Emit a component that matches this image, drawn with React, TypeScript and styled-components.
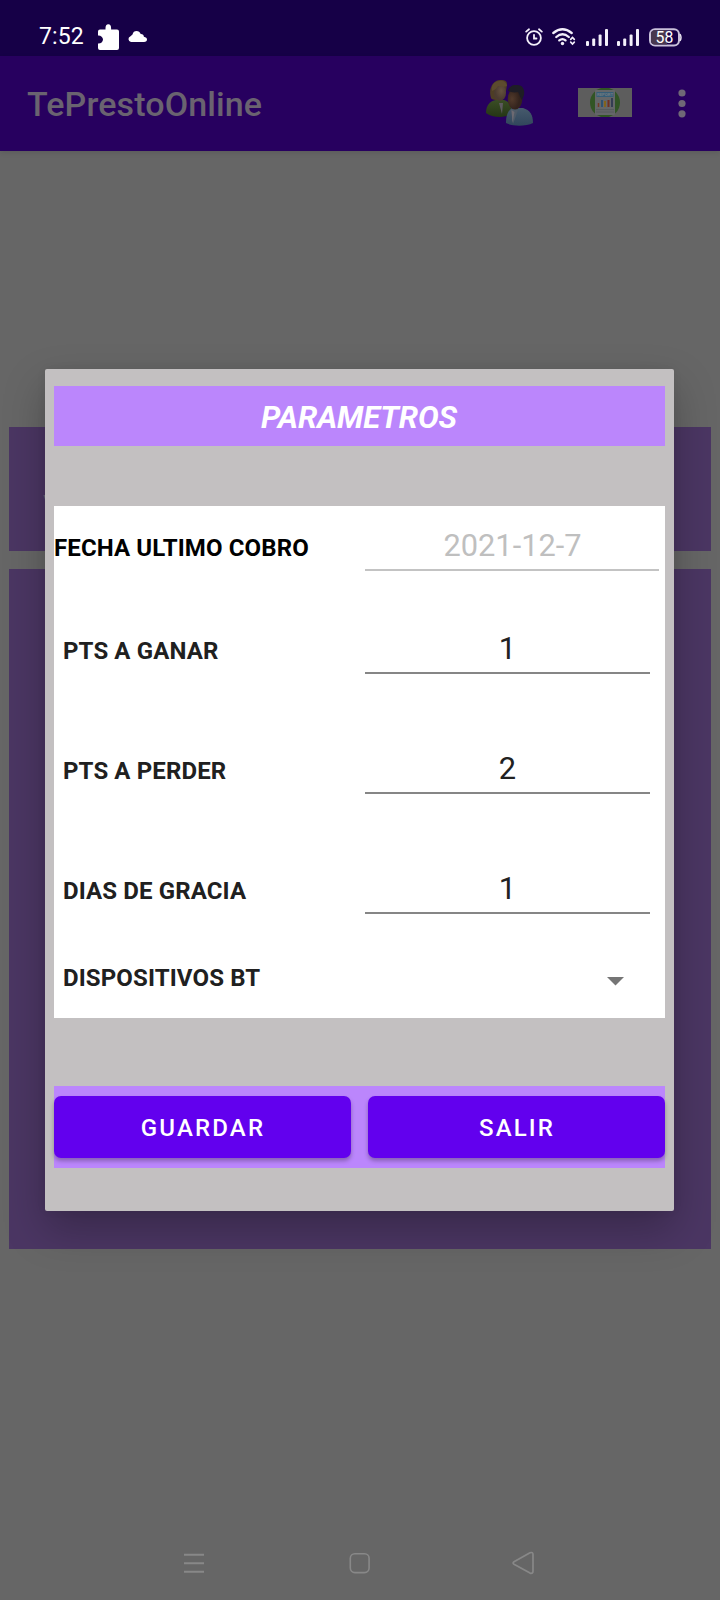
import React from "react";
import styled, { createGlobalStyle } from "styled-components";

const GlobalStyle = createGlobalStyle`
  * { box-sizing: border-box; }
  body { margin: 0; background: #666; font-family: Roboto, "Liberation Sans", sans-serif; }
  svg { display: block; flex: none; }
`;

const Screen = styled.div`
  position: relative;
  width: 720px;
  height: 1600px;
  display: flex;
  flex-direction: column;
  background: #666;
  overflow: hidden;
`;

const StatusBar = styled.div`
  height: 56px;
  flex: none;
  display: flex;
  align-items: center;
  justify-content: space-between;
  padding: 18px 38px 0 39px;
  background: #160047;
`;

const StatusGroup = styled.div<{ $gap: number }>`
  display: flex;
  align-items: center;
  gap: ${(p) => p.$gap}px;
`;

const Clock = styled.span`
  width: 50px;
  font-size: 23px;
  line-height: 34px;
  letter-spacing: 0.1px;
  color: #fff;
`;

const AppBar = styled.header`
  height: 95px;
  flex: none;
  display: flex;
  align-items: center;
  padding: 0 31px 2px 27px;
  background: #27005f;
  box-shadow: 0 2px 5px rgba(0, 0, 0, 0.1);
`;

const AppTitle = styled.h1`
  flex: 1;
  margin: 0;
  padding-top: 2px;
  font-size: 34px;
  font-weight: 500;
  line-height: 40px;
  letter-spacing: 0.12px;
  color: #6a6370;
`;

const Actions = styled.div`
  display: flex;
  align-items: center;
`;

const Content = styled.main`
  flex: 1;
  display: flex;
  flex-direction: column;
  gap: 18px;
  padding: 276px 9px 0;
`;

const Panel = styled.section<{ $height: number }>`
  height: ${(p) => p.$height}px;
  padding: 63px 34px 0;
  font-size: 26px;
  line-height: 30px;
  color: #6b6474;
  background: #4b3663;
`;

const NavBar = styled.nav`
  height: 74px;
  flex: none;
  display: flex;
  align-items: center;
  justify-content: space-between;
  padding: 0 185px 0 183px;
`;

const Dialog = styled.div`
  position: absolute;
  top: 369px;
  left: 45px;
  width: 629px;
  height: 842px;
  padding: 17px 9px 43px;
  display: flex;
  flex-direction: column;
  background: #c3c0c1;
  border-radius: 2px;
  box-shadow: 0 18px 42px rgba(0, 0, 0, 0.25), 0 0 10px rgba(0, 0, 0, 0.06);
`;

const DialogTitle = styled.h2`
  margin: 0 0 60px;
  height: 60px;
  padding-right: 1px;
  text-align: center;
  font-size: 31px;
  font-weight: 700;
  font-style: italic;
  line-height: 63px;
  letter-spacing: -0.15px;
  color: #fff;
  background: #bb86fc;
`;

const Form = styled.div`
  height: 512px;
  background: #fff;
`;

const Row = styled.div<{ $height: number }>`
  display: grid;
  grid-template-columns: 311px 1fr;
  height: ${(p) => p.$height}px;
`;

const Label = styled.label<{ $flush?: boolean }>`
  align-self: center;
  padding: ${(p) => (p.$flush ? "0 0 2px" : "0 0 0 9px")};
  font-size: 24px;
  font-weight: 700;
  line-height: 28px;
  letter-spacing: 0.12px;
  color: ${(p) => (p.$flush ? "#000" : "#202020")};
`;

const Value = styled.div<{ $height: number; $disabled?: boolean }>`
  display: flex;
  align-items: flex-end;
  justify-content: center;
  height: ${(p) => p.$height}px;
  margin-right: ${(p) => (p.$disabled ? 6 : 15)}px;
  padding-left: ${(p) => (p.$disabled ? 1 : 0)}px;
  border-bottom: 2px solid ${(p) => (p.$disabled ? "#c3c3c3" : "#868686")};
  font-size: 30.8px;
  line-height: 47px;
  color: ${(p) => (p.$disabled ? "#bfbfbf" : "#212121")};
`;

const Spinner = styled.div`
  display: flex;
  align-items: center;
  justify-content: flex-end;
  padding: 7px 41px 0 0;
`;

const ButtonBar = styled.div`
  height: 82px;
  margin-top: 68px;
  display: flex;
  align-items: center;
  gap: 17px;
  background: #bb86fc;
`;

const Button = styled.button`
  flex: 1;
  height: 62px;
  border: 0;
  border-radius: 7px;
  padding: 2px 0 0 1px;
  font-family: inherit;
  font-size: 24px;
  font-weight: 500;
  letter-spacing: 2.15px;
  color: #fff;
  background: #6200ee;
  box-shadow: 0 3px 4px rgba(0, 0, 0, 0.28);
`;

const PuzzleIcon = () => (
  <svg width="21" height="27" viewBox="0 0 21 27" fill="#fff">
    <path d="M2 5.500h5.500V4a2.800 3.800 0 0 1 5.600 0v1.500H19a2 2 0 0 1 2 2V24a2 2 0 0 1-2 2H2a2 2 0 0 1-2-2v-4.500c2.500.3 5-1.500 5-4s-2.500-4.300-5-4v-4a2 2 0 0 1 2-2z" />
  </svg>
);

const CloudIcon = () => (
  <svg width="19" height="13" viewBox="0 0 19 13" fill="#fff">
    <path d="M3 11a3 3 0 0 1-.5-5.800L4.500 3.500C5 1 6.500 0 8.500 0c2 0 3.500 1.200 4.200 3 2-.1 3 1 3.200 2.700C18 6 19 7.200 19 8.500S18 11 16 11z" />
  </svg>
);

const AlarmIcon = () => (
  <svg width="18" height="18" viewBox="0 0 18 18" fill="none" stroke="#f3effa" strokeWidth="1.800" strokeLinecap="round">
    <circle cx="9" cy="10" r="6.900" />
    <path d="M9 6.800v3.700h2.500M1.200 3.600 4 1.300M16.800 3.600 14 1.300" />
  </svg>
);

const WifiIcon = () => (
  <svg width="24" height="18" viewBox="0 0 24 18" fill="none" stroke="#f3effa" strokeWidth="2.300" strokeLinecap="round">
    <path d="M1.300 5Q10.500-2.600 19.700 5M4.300 9Q10.500 3.500 16.800 9M7.300 12.400Q10.500 9.800 13.500 12.400" />
    <circle cx="10.500" cy="15.500" r="1.700" fill="#f3effa" stroke="none" />
    <path d="m18.700 11.300 1.800-1.800 1.800 1.800M18.700 14.200l1.800 1.800 1.800-1.800" strokeWidth="1.700" />
  </svg>
);

const SignalIcon = () => (
  <svg width="22" height="17" viewBox="0 0 22 17" fill="#f3effa">
    <rect x="0" y="12" width="3" height="5" rx="1" />
    <rect x="6.200" y="9.500" width="3" height="7.500" rx="1" />
    <rect x="12.600" y="5.500" width="3" height="11.500" rx="1" />
    <rect x="19" y="0" width="3" height="17" rx="1" />
  </svg>
);

const BatteryIcon = () => (
  <svg width="33" height="19" viewBox="0 0 33 19">
    <rect x="1" y="1.200" width="29" height="16.400" rx="5" fill="#160047" stroke="#c9c0da" strokeWidth="2" />
    <path d="M6 2.200h12v14.400H6a4 4 0 0 1-4-4V6.200a4 4 0 0 1 4-4z" fill="#49384f" />
    <path d="M31 6q2 3.500 0 7" stroke="#e8e2f0" strokeWidth="1.500" fill="none" />
    <text x="15.500" y="14.900" textAnchor="middle" fontSize="15.800" fontFamily="Roboto, sans-serif" fill="#fff">58</text>
  </svg>
);

const PeopleIcon = () => (
  <svg width="48" height="46" viewBox="0 0 48 46">
    <defs>
      <radialGradient id="skinLight" cx=".6" cy=".4"><stop stopColor="#65523f" /><stop offset="1" stopColor="#4b3b30" /></radialGradient>
      <radialGradient id="skinDark" cx=".3" cy=".5"><stop stopColor="#523a2b" /><stop offset="1" stopColor="#33231d" /></radialGradient>
      <linearGradient id="green" x2="0" y2="1"><stop stopColor="#3a4d25" /><stop offset="1" stopColor="#253615" /></linearGradient>
      <linearGradient id="blue" x2="0" y2="1"><stop stopColor="#465a6c" /><stop offset="1" stopColor="#31465c" /></linearGradient>
    </defs>
    <path d="M0 33c0-8 4-12 10-13h8c6 2 8 6 8 14-6 4-20 4-26-1z" fill="url(#green)" />
    <path d="m13 23 3 11 1-11z" fill="#5d595e" />
    <path d="M5 18C2 9 7 0 14 0c5-.5 7.500 1.500 7 5l-2 12-6 3c-3 0-7 0-8-2z" fill="#4d3d25" />
    <ellipse cx="14" cy="12.500" rx="6" ry="8.500" fill="url(#skinLight)" />
    <path d="M6 11c3-1 5-3 6-5 4 1 7 1 9 0-1-5-5-5.500-8-5C8 1.500 5 5 6 11z" fill="#5c4b2e" />
    <path d="M20 43c0-8 2-12 6-15h11c7 2 10 7 10 15-7 3.500-21 3.500-27 0z" fill="url(#blue)" />
    <path d="m25 29 2 15 5-14z" fill="#4d5a68" />
    <path d="m25.500 30 1 13 2-11z" fill="#6d6a72" />
    <ellipse cx="29" cy="19" rx="7.300" ry="10.500" fill="url(#skinDark)" />
    <path d="M22 11c1-5 5-6.500 9-6 6 0 8 5 7 10l-2 5c-2-2-2-5-4-8-4 1-7 0-10-1z" fill="#1e1d25" />
  </svg>
);

const ReportIcon = () => (
  <svg width="54" height="29" viewBox="0 0 54 29">
    <rect width="54" height="29" fill="#5d5d5d" />
    <clipPath id="badge"><rect width="54" height="29" /></clipPath>
    <circle cx="27" cy="14.500" r="15" fill="#315525" clipPath="url(#badge)" />
    <rect x="17" y="2" width="20" height="25" rx="1" fill="#646769" />
    <rect x="18.500" y="4" width="17" height="5" fill="#355d77" />
    <text x="27" y="8.200" textAnchor="middle" fontSize="4.300" fontWeight="700" fontFamily="Roboto, sans-serif" fill="#737b80">REPORT</text>
    <path d="M20.500 19v-4" stroke="#713a25" strokeWidth="1.500" />
    <path d="M24 19v-7" stroke="#2f5270" strokeWidth="2" />
    <path d="M27 19v-6" stroke="#82631d" strokeWidth="2" />
    <path d="M30.500 19v-7" stroke="#713022" strokeWidth="2" />
    <path d="M34 19v-9" stroke="#252f4b" strokeWidth="1.500" />
    <path d="M18 21.700h18M18 24h18" stroke="#525558" strokeWidth=".8" />
  </svg>
);

const MoreIcon = () => (
  <svg width="8" height="30" viewBox="0 0 8 30" fill="#6f6876">
    <circle cx="4" cy="4" r="3.600" />
    <circle cx="4" cy="14.500" r="3.600" />
    <circle cx="4" cy="24.800" r="3.600" />
  </svg>
);

const CaretIcon = () => (
  <svg width="17" height="9" viewBox="0 0 17 9" fill="#757575">
    <path d="M0 0h17L8.500 8.600z" />
  </svg>
);

const RecentsIcon = () => (
  <svg width="22" height="22" viewBox="0 0 22 22" stroke="#888" strokeWidth="2">
    <path d="M1 2.700h20M1 11.200h20M1 19.700h20" />
  </svg>
);

const HomeIcon = () => (
  <svg width="22" height="22" viewBox="0 0 22 22" fill="none" stroke="#888" strokeWidth="1.600">
    <rect x="2.300" y="1.800" width="18.800" height="18.800" rx="4.500" />
  </svg>
);

const BackIcon = () => (
  <svg width="23" height="24" viewBox="0 0 23 24" fill="none" stroke="#888" strokeWidth="1.700" strokeLinejoin="round">
    <path d="M2 10.800 18 1.800Q21 .7 21 3.500V20Q21 23 18 22.100L2 13.300Q.2 12 2 10.800z" />
  </svg>
);

const fields = [
  { label: "PTS A GANAR", value: "1" },
  { label: "PTS A PERDER", value: "2" },
  { label: "DIAS DE GRACIA", value: "1" },
];

const IconSlot = styled.div<{ $right?: number; $top?: number }>`
  margin-right: ${(p) => p.$right || 0}px;
  padding-top: ${(p) => p.$top || 0}px;
`;

export default function App() {
  return (
    <Screen>
      <GlobalStyle />
      <StatusBar>
        <StatusGroup $gap={9}>
          <Clock>7:52</Clock>
          <PuzzleIcon />
          <CloudIcon />
        </StatusGroup>
        <StatusGroup $gap={9}>
          <AlarmIcon />
          <IconSlot $right={1}><WifiIcon /></IconSlot>
          <SignalIcon />
          <IconSlot $right={1}><SignalIcon /></IconSlot>
          <BatteryIcon />
        </StatusGroup>
      </StatusBar>
      <AppBar>
        <AppTitle>TePrestoOnline</AppTitle>
        <Actions>
          <IconSlot $right={44}><PeopleIcon /></IconSlot>
          <IconSlot $right={46}><ReportIcon /></IconSlot>
          <IconSlot $right={3} $top={2}><MoreIcon /></IconSlot>
        </Actions>
      </AppBar>
      <Content>
        <Panel $height={124}>V</Panel>
        <Panel $height={680} />
      </Content>
      <NavBar>
        <RecentsIcon />
        <HomeIcon />
        <BackIcon />
      </NavBar>
      <Dialog role="dialog">
        <DialogTitle>PARAMETROS</DialogTitle>
        <Form>
          <Row $height={85}>
            <Label $flush>FECHA ULTIMO COBRO</Label>
            <Value $height={65} $disabled>2021-12-7</Value>
          </Row>
          {fields.map((f) => (
            <Row key={f.label} $height={120}>
              <Label>{f.label}</Label>
              <Value $height={83}>{f.value}</Value>
            </Row>
          ))}
          <Row $height={53}>
            <Label>DISPOSITIVOS BT</Label>
            <Spinner><CaretIcon /></Spinner>
          </Row>
        </Form>
        <ButtonBar>
          <Button>GUARDAR</Button>
          <Button>SALIR</Button>
        </ButtonBar>
      </Dialog>
    </Screen>
  );
}
